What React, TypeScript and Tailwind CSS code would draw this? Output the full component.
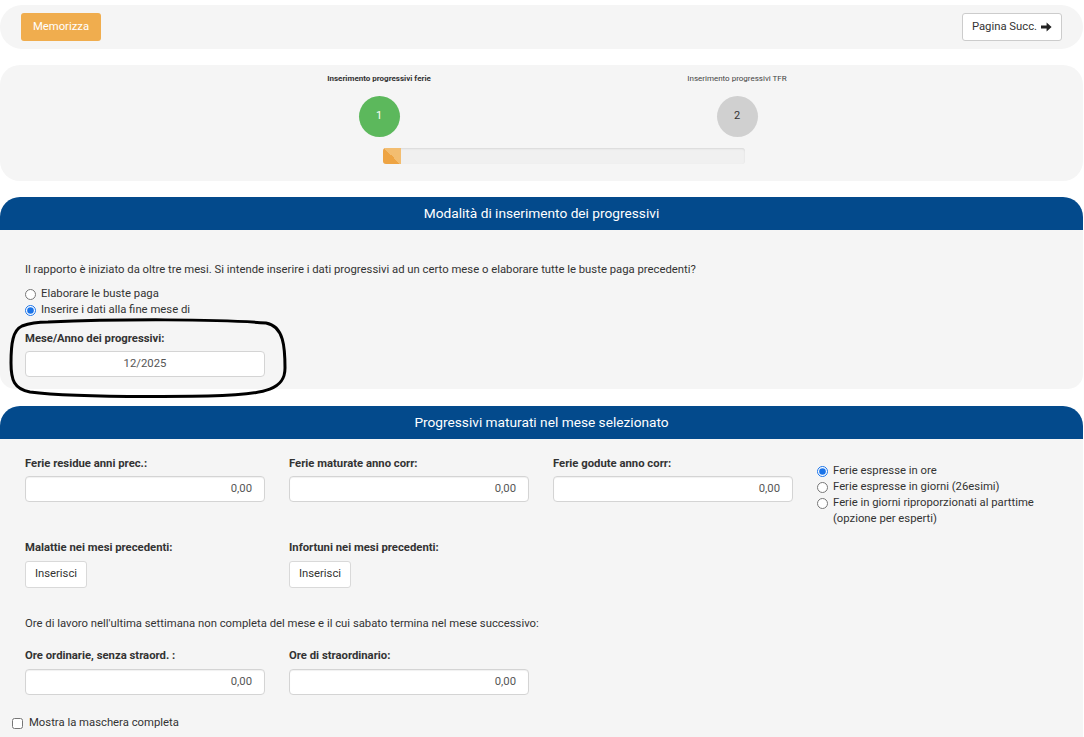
const font = { fontFamily: 'Roboto, "Liberation Sans", sans-serif' };

function NumInput({ value }: { value: string }) {
  return (
    <div className="h-[26px] w-[240px] rounded-[4px] border border-[#d4d4d4] bg-white shadow-[inset_0_1px_1px_rgba(0,0,0,0.06)] flex items-center justify-end pr-[12px] text-[11.3px] text-[#555]">
      {value}
    </div>
  );
}

function Radio({ checked, label }: { checked?: boolean; label: string }) {
  return (
    <label className="flex items-center gap-[5px] h-[16px] text-[11.3px] text-[#333]">
      <input type="radio" readOnly checked={!!checked} className="m-0 w-[11px] h-[11px] accent-[#1a73e8]" />
      <span>{label}</span>
    </label>
  );
}

function SectionHeader({ title }: { title: string }) {
  return (
    <div className="h-[33px] rounded-t-[20px] bg-[#034a8c] flex items-center justify-center text-[13.7px] text-white">
      {title}
    </div>
  );
}

function InsertButton() {
  return (
    <button className="h-[27px] w-[62px] rounded-[3px] border border-[#d9d9d9] bg-white text-[11.3px] text-[#333]">
      Inserisci
    </button>
  );
}

export default function App() {
  return (
    <div className="w-[1084px] bg-white pt-[5px]" style={font}>
      {/* top bar */}
      <div className="mr-[1px] h-[44px] rounded-[22px] bg-[#f5f5f5] flex items-center justify-between px-[21px]">
        <button className="h-[28px] w-[80px] rounded-[3px] bg-[#f0ad4e] text-[11.3px] text-white">Memorizza</button>
        <button className="h-[28px] w-[100px] rounded-[3px] border border-[#ccc] bg-white text-[11.3px] text-[#333] flex items-center justify-center gap-[4px]">
          Pagina Succ.
          <svg width="11" height="10" viewBox="0 0 11 10">
            <path d="M0 3.4 H5.6 V0.6 L10.6 5 L5.6 9.4 V6.6 H0 Z" fill="#222" />
          </svg>
        </button>
      </div>

      {/* steps */}
      <div className="mt-[16px] mr-[1px] h-[116px] rounded-[20px] bg-[#f5f5f5] pt-[9px]">
        <div className="flex pl-[200px]">
          <div className="w-[358px] flex flex-col items-center">
            <div className="h-[10px] text-[8px] leading-[10px] font-bold text-[#333]">Inserimento progressivi ferie</div>
            <div className="mt-[12px] w-[41px] h-[41px] rounded-full bg-[#5cb85c] flex items-center justify-center text-[11px] text-white">1</div>
          </div>
          <div className="w-[358px] flex flex-col items-center">
            <div className="h-[10px] text-[8px] leading-[10px] text-[#444]">Inserimento progressivi TFR</div>
            <div className="mt-[12px] w-[41px] h-[41px] rounded-full bg-[#d0d0d0] flex items-center justify-center text-[11px] text-[#333]">2</div>
          </div>
        </div>
        <div className="mt-[11px] ml-[383px] w-[362px] h-[16px] rounded-[3px] bg-[#f0f0f0] shadow-[inset_0_1px_2px_rgba(0,0,0,0.1)] overflow-hidden">
          <div className="h-full w-[18px] bg-[linear-gradient(45deg,#eea443_50%,#f3bd70_50%)]" />
        </div>
      </div>

      {/* section 1 */}
      <div className="relative mt-[16px] mr-[1px]">
        <SectionHeader title="Modalità di inserimento dei progressivi" />
        <div className="rounded-b-[15px] bg-[#f5f5f5] px-[25px] pt-[32px] pb-[12px] text-[11.3px] text-[#333]">
          <p className="leading-[16px]">
            Il rapporto è iniziato da oltre tre mesi. Si intende inserire i dati progressivi ad un certo mese o elaborare tutte le buste paga precedenti?
          </p>
          <div className="mt-[8px]">
            <Radio label="Elaborare le buste paga" />
            <Radio checked label="Inserire i dati alla fine mese di" />
          </div>
          <div className="mt-[13px] leading-[16px] font-bold">Mese/Anno dei progressivi:</div>
          <div className="mt-[4px] h-[26px] w-[240px] rounded-[4px] border border-[#d4d4d4] bg-white flex items-center justify-center text-[11.3px] text-[#555]">
            12/2025
          </div>
        </div>
        {/* hand drawn annotation */}
        <svg className="absolute left-[8px] top-[121px] pointer-events-none" width="280" height="82" viewBox="0 0 280 82" fill="none">
          <path
            d="M40 4 C110 1 210 1 258 5 C276 8 277 30 277 50 C277 70 262 77 200 78 C130 79 60 79 22 74 C6 71 3 62 3 45 C3 25 5 12 14 8 C22 5 30 4 40 4 Z"
            stroke="#000"
            strokeWidth="3"
          />
        </svg>
      </div>

      {/* section 2 */}
      <div className="mt-[17px] mr-[1px]">
        <SectionHeader title="Progressivi maturati nel mese selezionato" />
        <div className="bg-[#f5f5f5] pl-[12px] pt-[17px] pb-[10px] text-[11.3px] text-[#333]">
          <div className="pl-[13px] h-[46px] grid grid-cols-[240px_240px_240px_240px] gap-x-[24px]">
            <div>
              <div className="leading-[16px] font-bold">Ferie residue anni prec.:</div>
              <div className="mt-[4px]"><NumInput value="0,00" /></div>
            </div>
            <div>
              <div className="leading-[16px] font-bold">Ferie maturate anno corr:</div>
              <div className="mt-[4px]"><NumInput value="0,00" /></div>
            </div>
            <div>
              <div className="leading-[16px] font-bold">Ferie godute anno corr:</div>
              <div className="mt-[4px]"><NumInput value="0,00" /></div>
            </div>
            <div className="pt-[7px] leading-[16px]">
              <Radio checked label="Ferie espresse in ore" />
              <Radio label="Ferie espresse in giorni (26esimi)" />
              <Radio label="Ferie in giorni riproporzionati al parttime" />
              <div className="pl-[16px] h-[16px]">(opzione per esperti)</div>
            </div>
          </div>

          <div className="pl-[13px] mt-[38px] grid grid-cols-[240px_240px] gap-x-[24px]">
            <div>
              <div className="leading-[16px] font-bold">Malattie nei mesi precedenti:</div>
              <div className="mt-[5px]"><InsertButton /></div>
            </div>
            <div>
              <div className="leading-[16px] font-bold">Infortuni nei mesi precedenti:</div>
              <div className="mt-[5px]"><InsertButton /></div>
            </div>
          </div>

          <p className="pl-[13px] mt-[28px] leading-[16px]">
            Ore di lavoro nell'ultima settimana non completa del mese e il cui sabato termina nel mese successivo:
          </p>

          <div className="pl-[13px] mt-[16px] grid grid-cols-[240px_240px] gap-x-[24px]">
            <div>
              <div className="leading-[16px] font-bold">Ore ordinarie, senza straord. :</div>
              <div className="mt-[5px]"><NumInput value="0,00" /></div>
            </div>
            <div>
              <div className="leading-[16px] font-bold">Ore di straordinario:</div>
              <div className="mt-[5px]"><NumInput value="0,00" /></div>
            </div>
          </div>

          <label className="mt-[20px] flex items-center gap-[6px] h-[16px]">
            <input type="checkbox" readOnly className="m-0 w-[11px] h-[11px]" />
            <span>Mostra la maschera completa</span>
          </label>
        </div>
      </div>
    </div>
  );
}
